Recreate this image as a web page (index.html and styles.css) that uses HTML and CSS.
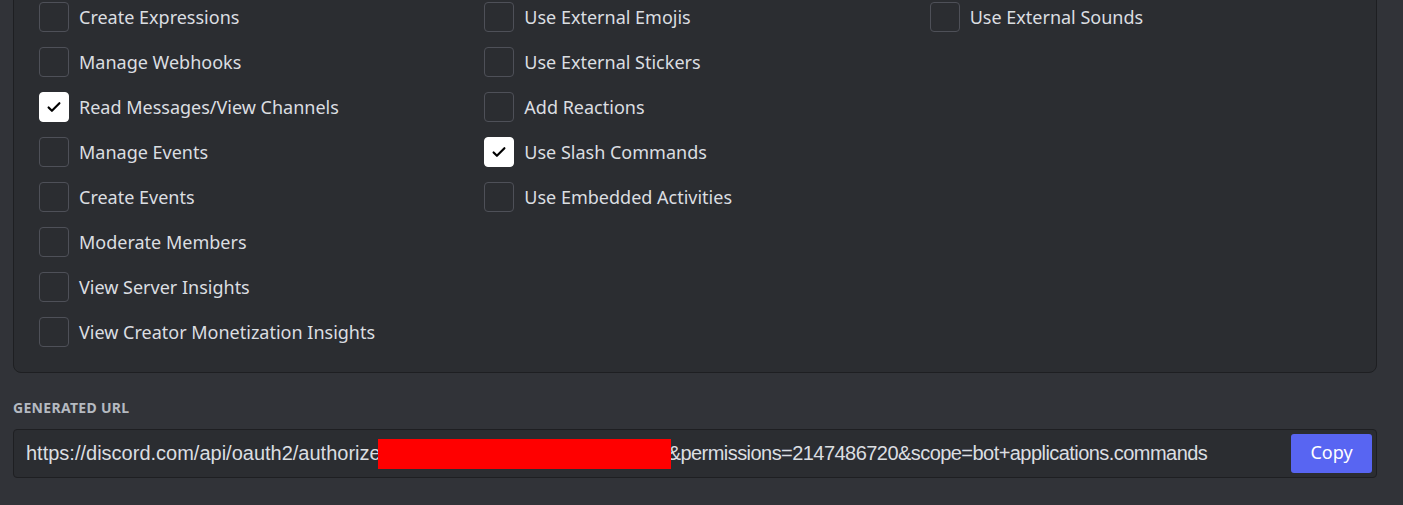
FILE: index.html
```html
<!DOCTYPE html>
<html>
<head>
<meta charset="utf-8">
<link rel="stylesheet" href="styles.css">
</head>
<body>
<div class="page">
  <div class="panel">
    <div class="col">
      <div class="item"><span class="box"></span><span class="label">Create Expressions</span></div>
      <div class="item"><span class="box"></span><span class="label">Manage Webhooks</span></div>
      <div class="item"><span class="box checked"><svg viewBox="0 0 24 24" width="20" height="20"><path d="M5.5 12.5l4 4 9-9" fill="none" stroke="#000" stroke-width="2.6" stroke-linecap="round" stroke-linejoin="round"/></svg></span><span class="label">Read Messages/View Channels</span></div>
      <div class="item"><span class="box"></span><span class="label">Manage Events</span></div>
      <div class="item"><span class="box"></span><span class="label">Create Events</span></div>
      <div class="item"><span class="box"></span><span class="label">Moderate Members</span></div>
      <div class="item"><span class="box"></span><span class="label">View Server Insights</span></div>
      <div class="item"><span class="box"></span><span class="label">View Creator Monetization Insights</span></div>
    </div>
    <div class="col">
      <div class="item"><span class="box"></span><span class="label">Use External Emojis</span></div>
      <div class="item"><span class="box"></span><span class="label">Use External Stickers</span></div>
      <div class="item"><span class="box"></span><span class="label">Add Reactions</span></div>
      <div class="item"><span class="box checked"><svg viewBox="0 0 24 24" width="20" height="20"><path d="M5.5 12.5l4 4 9-9" fill="none" stroke="#000" stroke-width="2.6" stroke-linecap="round" stroke-linejoin="round"/></svg></span><span class="label">Use Slash Commands</span></div>
      <div class="item"><span class="box"></span><span class="label">Use Embedded Activities</span></div>
    </div>
    <div class="col">
      <div class="item"><span class="box"></span><span class="label">Use External Sounds</span></div>
    </div>
  </div>
  <div class="section-title">GENERATED URL</div>
  <div class="url-field">
    <div class="url-text"><span class="url-a">https://discord.com/api/oauth2/authorize</span><span class="redact"></span><span class="url-b">&amp;permissions=2147486720&amp;scope=bot+applications.commands</span></div>
    <button class="copy">Copy</button>
  </div>
</div>
</body>
</html>
```

FILE: styles.css
```css
html, body {
  margin: 0;
  padding: 0;
  background: #313338;
  overflow: hidden;
}
.page {
  padding: 0 26px 0 13px;
  font-family: "Noto Sans", "Open Sans", sans-serif;
}
.panel {
  margin-top: -21px;
  padding: 22px 25px 25px 25px;
  background: #2b2d31;
  border: 1px solid #1e1f22;
  border-radius: 8px;
  display: grid;
  grid-template-columns: repeat(3, 1fr);
  column-gap: 24px;
}
.col {
  display: flex;
  flex-direction: column;
  gap: 15px;
}
.item {
  display: flex;
  align-items: center;
  gap: 10px;
  height: 30px;
}
.box {
  width: 30px;
  height: 30px;
  box-sizing: border-box;
  border: 1px solid #4e5058;
  border-radius: 4px;
  flex: none;
  display: flex;
  align-items: center;
  justify-content: center;
}
.box.checked {
  background: #ffffff;
  border-color: #ffffff;
}
.label {
  color: #dbdee1;
  font-size: 18px;
  line-height: 24px;
  white-space: nowrap;
}
.section-title {
  margin-top: 26px;
  color: #b5bac1;
  font-size: 14px;
  font-weight: 700;
  letter-spacing: 0.3px;
  line-height: 18px;
}
.url-field {
  margin-top: 12px;
  height: 49px;
  box-sizing: border-box;
  border: 1px solid #1e1f22;
  border-radius: 4px;
  background: #2b2d31;
  display: flex;
  align-items: center;
  padding: 0 4px 0 12px;
}
.url-text {
  flex: 1;
  color: #dbdee1;
  font-family: "Liberation Sans", Arial, sans-serif;
  font-size: 20px;
  white-space: nowrap;
  display: flex;
  align-items: center;
}
.url-b {
  letter-spacing: -0.55px;
}
.redact {
  display: inline-block;
  width: 293px;
  height: 30px;
  margin-left: -3px;
  margin-right: -3px;
  background: #ff0000;
  position: relative;
}
.copy {
  width: 81px;
  height: 39px;
  margin-top: -1px;
  border: none;
  border-radius: 3px;
  background: #5865f2;
  color: #ffffff;
  font-family: "Noto Sans", sans-serif;
  font-size: 18px;
  line-height: 24px;
  padding: 0 0 3px 0;
}
```
